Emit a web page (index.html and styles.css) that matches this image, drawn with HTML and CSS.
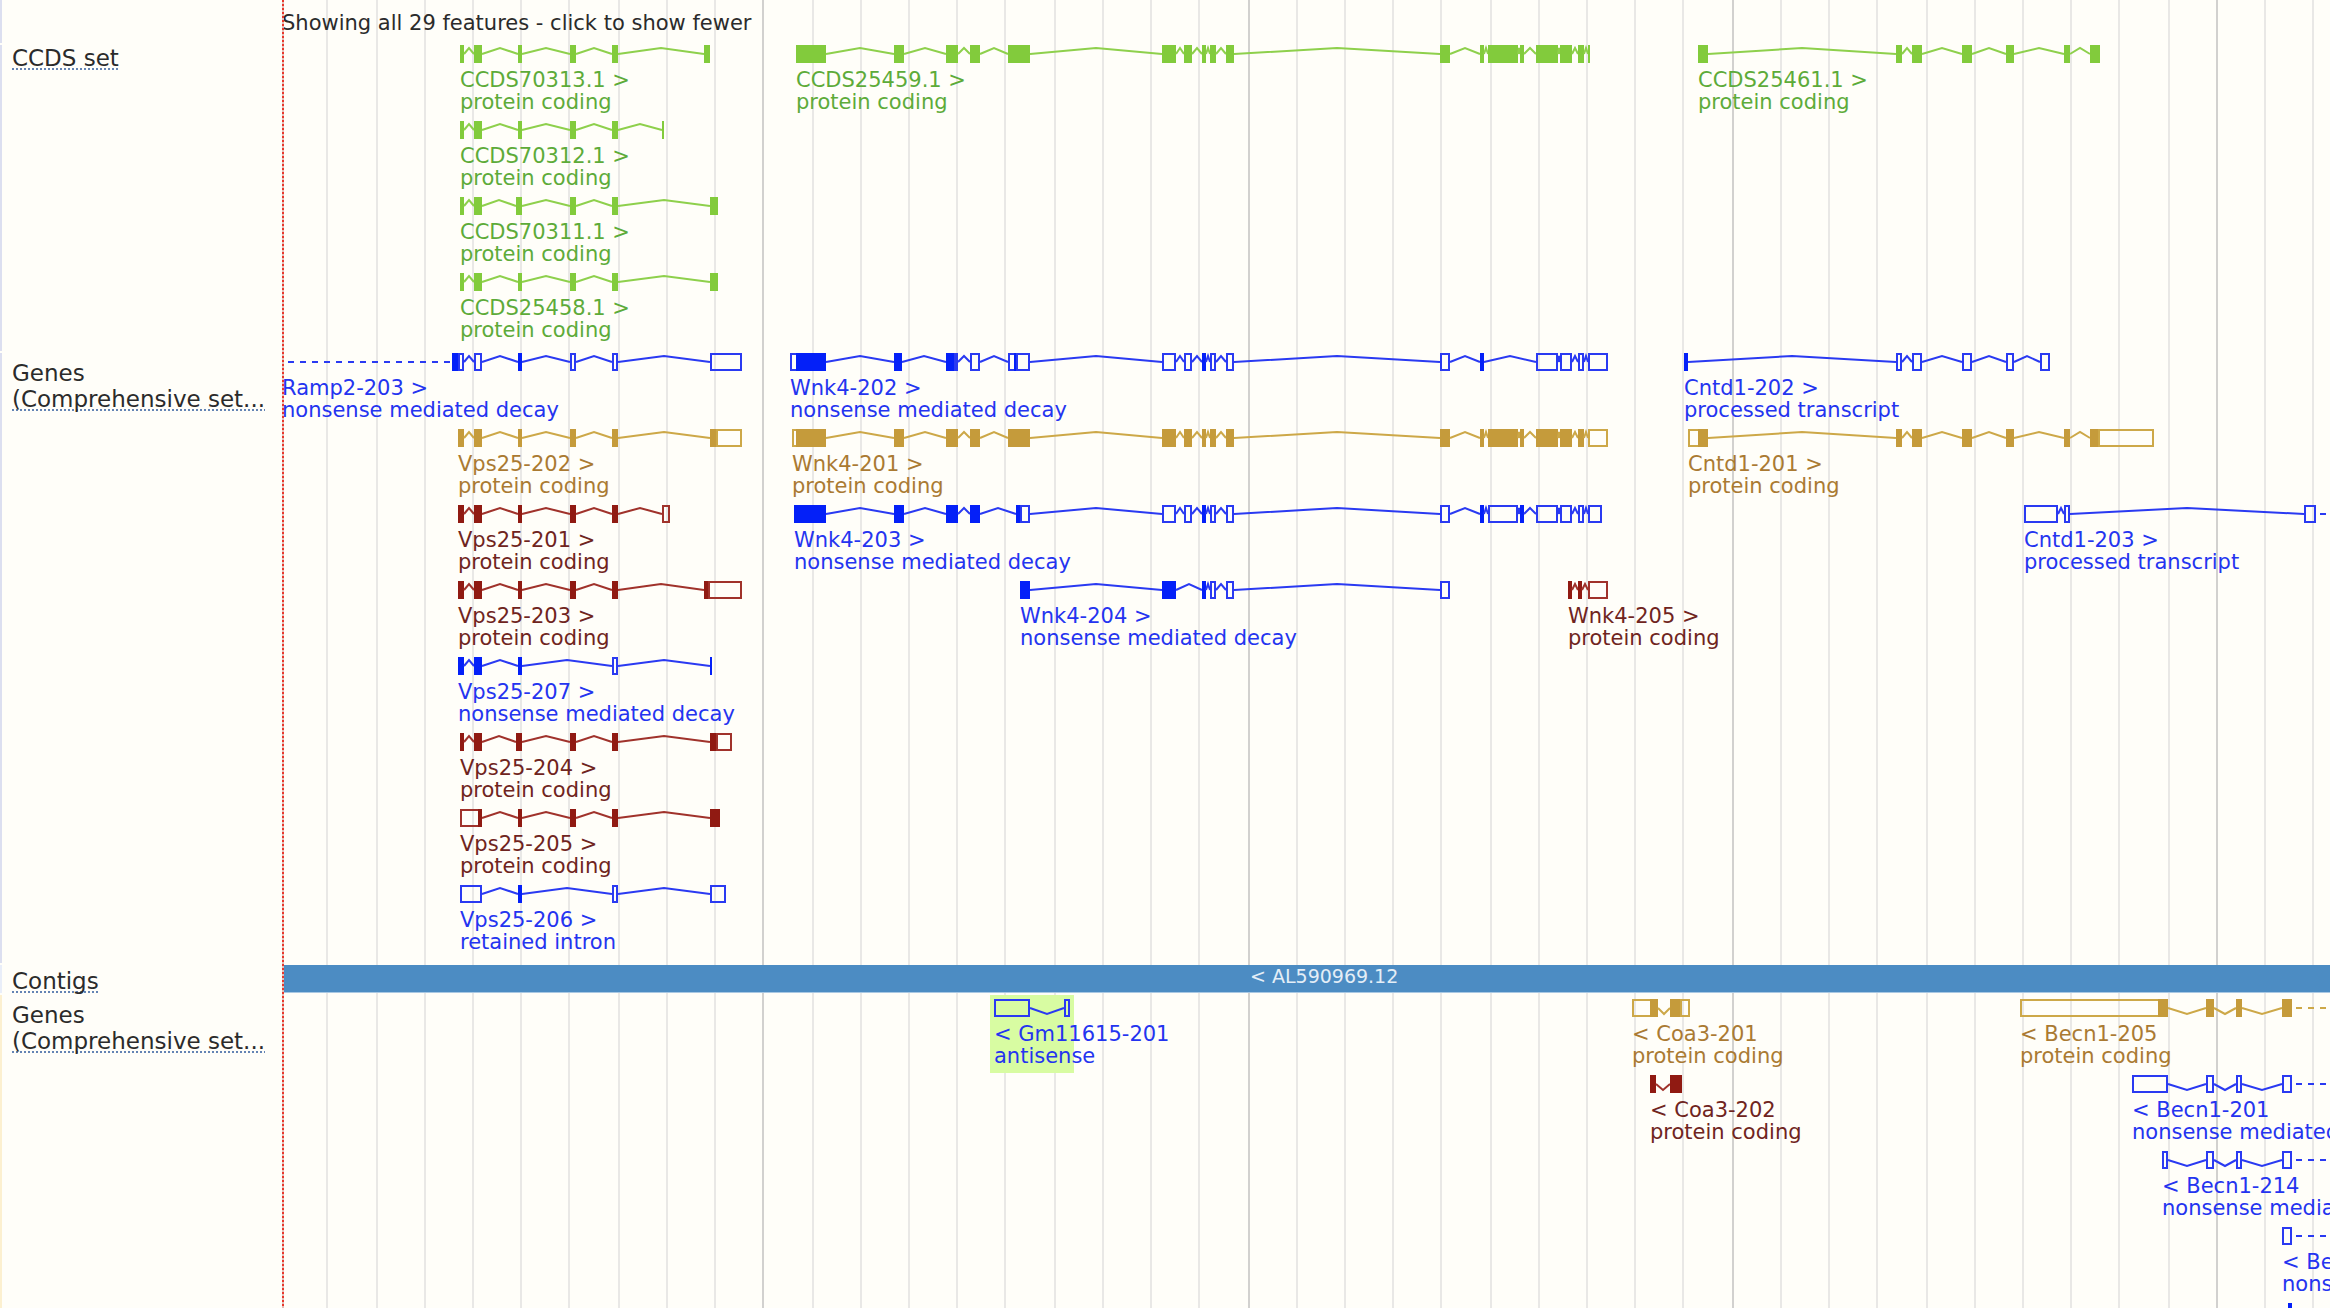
FILE: index.html
```html
<!DOCTYPE html>
<html lang="en">
<head>
<meta charset="utf-8">
<title>Region in detail</title>
<link rel="stylesheet" href="styles.css">
</head>
<body>
<main class="viewer">
  <div class="grid" id="grid" aria-hidden="true"></div>

  <section class="track track-forward track-summary">
    <div class="track-label"></div>
    <div class="track-canvas">
      <button type="button" class="toggle">Showing all 29 features - click to show fewer</button>
    </div>
  </section>

  <section class="track track-forward track-ccds">
    <div class="track-label"><a href="#ccds">CCDS set</a></div>
    <div class="track-canvas" id="ccds"></div>
  </section>

  <section class="track track-forward track-genes">
    <div class="track-label">Genes<br><a href="#genes-forward">(Comprehensive set...</a></div>
    <div class="track-canvas" id="genes-forward"></div>
  </section>

  <section class="track track-contigs">
    <div class="track-label"><a href="#contigs">Contigs</a></div>
    <div class="track-canvas contig" id="contigs"><span class="contig-name">&lt; AL590969.12</span></div>
  </section>

  <section class="track track-reverse">
    <div class="track-label">Genes<br><a href="#genes-reverse">(Comprehensive set...</a></div>
    <div class="track-canvas" id="genes-reverse"></div>
  </section>

  <div class="edge" aria-hidden="true"></div>
</main>
<script src="tracks.js"></script>
</body>
</html>
```

FILE: styles.css
```css
:root {
  --label-width: 282px;
  --paper: #fffef9;
}

* {
  box-sizing: border-box;
}

body {
  margin: 0;
  background: var(--paper);
  color: #2b2b2b;
  font-family: "DejaVu Sans", Verdana, sans-serif;
  font-size: 21px;
  line-height: 22px;
}

.viewer {
  position: relative;
  display: flex;
  flex-direction: column;
  gap: 2px;
  height: 100vh;
  overflow: hidden;
}

/* scale lines behind the tracks */
.grid {
  position: absolute;
  inset: 0 0 0 var(--label-width);
  overflow: hidden;
}

.grid-line {
  position: absolute;
  top: 0;
  bottom: 0;
  width: 2px;
  background: #e9e8e6;
}

.grid-line.major {
  background: #d2d1cf;
}

.edge {
  position: absolute;
  top: 0;
  bottom: 0;
  left: var(--label-width);
  width: 2px;
  background: repeating-linear-gradient(#e8382c 0 2px, #e5bdb6 2px 4px);
}

.track {
  position: relative;
  display: flex;
  flex: none;
  border-left: 2px solid #dcdff0;
}

.track-label {
  flex: none;
  width: calc(var(--label-width) - 2px);
  padding-left: 10px;
  font-size: 23px;
  line-height: 26px;
  white-space: nowrap;
}

.track-label a {
  color: inherit;
  text-decoration: underline dotted 2px #6484b4;
  text-underline-offset: 2px;
  text-decoration-skip-ink: none;
}

.track-canvas {
  position: relative;
  flex: 1;
  min-width: 0;
}

.track-summary {
  height: 43px;
}

.track-summary .track-canvas {
  padding-top: 12px;
}

.toggle {
  display: block;
  padding: 0;
  border: 0;
  background: none;
  color: inherit;
  font: inherit;
  white-space: nowrap;
  cursor: pointer;
}

.track-ccds {
  padding-bottom: 2px;
}

.track-genes .track-label,
.track-reverse .track-label {
  padding-top: 7px;
}

.track-genes {
  padding-bottom: 2px;
}

.track-contigs {
  height: 28px;
  border-left-color: #e9eef9;
}

.track-contigs .track-label {
  padding-top: 3px;
}

.contig {
  background: #4c8cc3;
  border-bottom: 1px solid #a9c8e3;
}

.contig-name {
  position: absolute;
  left: 968px;
  color: #e4eef7;
  font-size: 19px;
}

.track-reverse {
  border-left-color: #fcf0d0;
}

.track-reverse .track-canvas {
  padding-top: 4px;
}

/* one line of transcripts */
.row {
  position: relative;
  height: 76px;
}

.feature {
  position: absolute;
  top: 0;
  white-space: nowrap;
}

.feature.marked::before {
  content: "";
  position: absolute;
  z-index: -1;
  top: -4px;
  left: -4px;
  width: 84px;
  height: 78px;
  background: #d8fca2;
}

.feature.marked {
  z-index: 0;
}

.feature svg {
  display: block;
  height: 18px;
  margin-bottom: 6px;
  overflow: visible;
}

.feature span {
  display: block;
}

.solid {
  fill: var(--exon);
}

.hollow {
  fill: none;
  stroke: var(--line);
  stroke-width: 2;
}

.intron {
  fill: none;
  stroke: var(--line);
  stroke-width: 2;
}

.offscreen {
  fill: none;
  stroke: var(--line);
  stroke-width: 2;
  stroke-dasharray: 6 6;
}

.ccds {
  --exon: #82cb3c;
  --line: #8ed04c;
  color: #5dab39;
}

.merged {
  --exon: #c59b3b;
  --line: #cda848;
  color: #aa7a32;
}

.coding {
  --exon: #901a12;
  --line: #a0322b;
  color: #6f2420;
}

.noncoding {
  --exon: #0420f8;
  --line: #2a3af2;
  color: #2434f0;
}
```

FILE: tracks.js
```js
const ORIGIN = 282;

/* Exons are "f" (coding, filled) or "o" (untranslated, outlined) with start-end;
   "d" is a dashed run that continues outside the region. */
const FORWARD_CCDS = [
  [["ccds", "CCDS70313.1 >", "protein coding", "f460-464 f474-482 f518-522 f570-576 f612-618 f704-710"],
   ["ccds", "CCDS25459.1 >", "protein coding", "f796-826 f894-904 f946-958 f970-980 f1008-1030 f1162-1176 f1184-1192 f1202-1206 f1210-1216 f1226-1234 f1440-1450 f1480-1484 f1488-1518 f1520-1524 f1536-1558 f1560-1572 f1578-1584 f1588-1590"],
   ["ccds", "CCDS25461.1 >", "protein coding", "f1698-1708 f1896-1902 f1912-1922 f1962-1972 f2006-2014 f2064-2070 f2090-2100"]],
  [["ccds", "CCDS70312.1 >", "protein coding", "f460-464 f474-482 f518-522 f570-576 f612-618 f662-664"]],
  [["ccds", "CCDS70311.1 >", "protein coding", "f460-464 f474-482 f516-522 f570-576 f612-618 f710-718"]],
  [["ccds", "CCDS25458.1 >", "protein coding", "f460-464 f474-482 f518-522 f570-576 f612-618 f710-718"]]
];

const FORWARD_GENES = [
  [["noncoding", "Ramp2-203 >", "nonsense mediated decay", "d288-452 f452-460 o458-464 o474-482 f518-522 o570-576 o612-618 o710-742"],
   ["noncoding", "Wnk4-202 >", "nonsense mediated decay", "o790-798 f796-826 f894-902 f946-956 o954-958 o970-980 o1008-1016 f1014-1018 o1016-1030 o1162-1176 o1184-1192 f1202-1206 o1210-1216 o1226-1234 o1440-1450 f1480-1484 o1536-1558 o1560-1572 o1578-1584 o1588-1608"],
   ["noncoding", "Cntd1-202 >", "processed transcript", "f1684-1688 o1896-1902 o1912-1922 o1962-1972 o2006-2014 o2040-2050"]],
  [["merged", "Vps25-202 >", "protein coding", "f458-464 f474-482 f518-522 f570-576 f612-618 f710-718 o716-742"],
   ["merged", "Wnk4-201 >", "protein coding", "o792-798 f796-826 f894-904 f946-958 f970-980 f1008-1030 f1162-1176 f1184-1192 f1202-1206 f1210-1216 f1226-1234 f1440-1450 f1480-1484 f1488-1518 f1520-1524 f1536-1558 f1560-1572 f1578-1584 o1588-1608"],
   ["merged", "Cntd1-201 >", "protein coding", "o1688-1700 f1698-1708 f1896-1902 f1912-1922 f1962-1972 f2006-2014 f2064-2070 f2090-2100 o2098-2154"]],
  [["coding", "Vps25-201 >", "protein coding", "f458-464 f474-482 f518-522 f570-576 f612-618 o662-670"],
   ["noncoding", "Wnk4-203 >", "nonsense mediated decay", "f794-826 f894-904 f946-958 f970-980 f1016-1022 o1020-1030 o1162-1176 o1184-1192 f1202-1206 o1210-1216 o1226-1234 o1440-1450 f1480-1484 o1488-1518 f1520-1524 o1536-1558 o1560-1572 o1578-1584 o1588-1602"],
   ["noncoding", "Cntd1-203 >", "processed transcript", "o2024-2058 o2064-2070 o2304-2316 d2320-2400"]],
  [["coding", "Vps25-203 >", "protein coding", "f458-464 f474-482 f518-522 f570-576 f612-618 f704-710 o708-742"],
   ["noncoding", "Wnk4-204 >", "nonsense mediated decay", "f1020-1030 f1162-1176 f1202-1206 o1210-1216 o1226-1234 o1440-1450"],
   ["coding", "Wnk4-205 >", "protein coding", "f1568-1572 f1578-1582 o1588-1608"]],
  [["noncoding", "Vps25-207 >", "nonsense mediated decay", "f458-464 f474-482 f518-522 o612-618 f710-712"]],
  [["coding", "Vps25-204 >", "protein coding", "f460-464 f474-482 f516-522 f570-576 f612-618 f710-718 o716-732"]],
  [["coding", "Vps25-205 >", "protein coding", "o460-480 f478-482 f518-522 f570-576 f612-618 f710-720"]],
  [["noncoding", "Vps25-206 >", "retained intron", "o460-482 f518-522 o612-618 o710-726"]]
];

const REVERSE_GENES = [
  [["noncoding marked", "< Gm11615-201", "antisense", "o994-1030 o1064-1070"],
   ["merged", "< Coa3-201", "protein coding", "o1632-1652 f1650-1658 f1670-1682 o1680-1690"],
   ["merged", "< Becn1-205", "protein coding", "o2020-2160 f2158-2168 f2206-2214 f2236-2242 f2282-2292 d2296-2400"]],
  [["coding", "< Coa3-202", "protein coding", "f1650-1656 f1670-1682"],
   ["noncoding", "< Becn1-201", "nonsense mediated decay", "o2132-2168 o2206-2214 o2236-2242 o2282-2292 d2296-2400"]],
  [["noncoding", "< Becn1-214", "nonsense mediated decay", "o2162-2168 o2206-2214 o2236-2242 o2282-2292 d2296-2400"]],
  [["noncoding", "< Becn1", "nonsense mediated decay", "o2282-2292 d2296-2400"]],
  [["noncoding", "", "", "f2288-2292"]]
];

function drawTranscript(spec, left, reverse) {
  let shapes = "";
  let lastEnd = null;
  for (const token of spec.split(" ")) {
    const [start, end] = token.slice(1).split("-").map(n => Number(n) - left);
    if (token[0] === "d") {
      shapes += `<path class="offscreen" d="M${start} 9H${end}"/>`;
      continue;
    }
    if (lastEnd !== null && start > lastEnd) {
      const peak = reverse ? 15 : 3;
      shapes += `<path class="intron" d="M${lastEnd} 9L${(lastEnd + start) / 2} ${peak}L${start} 9"/>`;
    }
    shapes += token[0] === "f"
      ? `<rect class="solid" x="${start}" y="0" width="${end - start}" height="18"/>`
      : `<rect class="hollow" x="${start + 1}" y="1" width="${end - start - 2}" height="16"/>`;
    lastEnd = end;
  }
  return `<svg width="20" height="18" aria-hidden="true">${shapes}</svg>`;
}

function addLine(parent, text) {
  const line = document.createElement("span");
  line.textContent = text;
  parent.append(line);
}

function fillTrack(id, rows, reverse) {
  const canvas = document.getElementById(id);
  for (const features of rows) {
    const row = document.createElement("div");
    row.className = "row";
    for (const [kind, name, biotype, spec] of features) {
      const left = spec[0] === "d" ? ORIGIN : parseInt(spec.slice(1), 10);
      const feature = document.createElement("div");
      feature.className = `feature ${kind}`;
      feature.style.left = `${left - ORIGIN}px`;
      feature.innerHTML = drawTranscript(spec, left, reverse);
      if (name) {
        addLine(feature, name);
        addLine(feature, biotype);
      }
      row.append(feature);
    }
    canvas.append(row);
  }
}

/* scale: ten minor divisions for each major one */
const GRID = [326, 376, 424, 472, 520, 568, 618, 666, 714, 762, 812, 860, 908, 956, 1004,
  1054, 1102, 1150, 1198, 1248, 1296, 1344, 1392, 1440, 1490, 1538, 1586, 1634, 1682, 1732,
  1780, 1828, 1876, 1926, 1974, 2022, 2070, 2118, 2168, 2216, 2264, 2312];
GRID.forEach((x, i) => {
  const line = document.createElement("div");
  line.className = i % 10 === 9 ? "grid-line major" : "grid-line";
  line.style.left = `${x - ORIGIN}px`;
  document.getElementById("grid").append(line);
});

fillTrack("ccds", FORWARD_CCDS, false);
fillTrack("genes-forward", FORWARD_GENES, false);
fillTrack("genes-reverse", REVERSE_GENES, true);
```
